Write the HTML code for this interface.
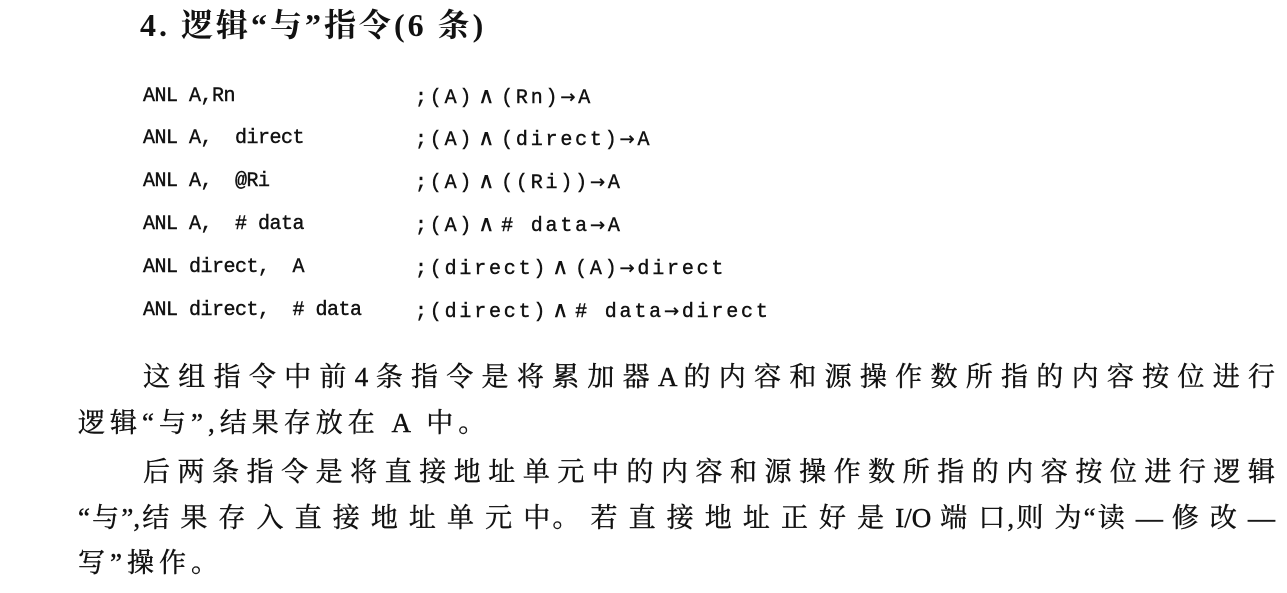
<!DOCTYPE html>
<html><head><meta charset="utf-8"><style>
body{margin:0;width:1287px;height:593px;background:#fff;position:relative;overflow:hidden;color:#111}
.t{position:absolute;white-space:pre}
.h{left:140px;top:0px;font:bold 32px "Liberation Serif","Noto Serif CJK SC",serif;letter-spacing:3px}
.c{font:20px/24px "Liberation Mono","DejaVu Sans Mono",monospace;letter-spacing:-0.5px;-webkit-text-stroke:0.4px #111}
.r{letter-spacing:2.8px}
.c b{font-weight:normal;font-family:"DejaVu Sans",sans-serif;font-size:22px;margin:0 4px}
.c i{font-style:normal;font-family:"DejaVu Sans",sans-serif;font-size:18px}
.p{font:27px "Liberation Serif","Noto Serif CJK SC",serif;-webkit-text-stroke:0.4px #111}
.j{text-align:justify;text-align-last:justify;white-space:normal}
</style></head><body>
<div class="t h">4. 逻辑“与”指令(6 条)</div>
<div class="t c" style="left:143px;top:85px">ANL A,Rn</div>
<div class="t c" style="left:143px;top:127px">ANL A,  direct</div>
<div class="t c" style="left:143px;top:170px">ANL A,  @Ri</div>
<div class="t c" style="left:143px;top:213px">ANL A,  # data</div>
<div class="t c" style="left:143px;top:256px">ANL direct,  A</div>
<div class="t c" style="left:143px;top:299px">ANL direct,  # data</div>
<div class="t c r" style="left:415px;top:85px">;(A)<b>∧</b>(Rn)<i>→</i>A</div>
<div class="t c r" style="left:415px;top:127px">;(A)<b>∧</b>(direct)<i>→</i>A</div>
<div class="t c r" style="left:415px;top:170px">;(A)<b>∧</b>((Ri))<i>→</i>A</div>
<div class="t c r" style="left:415px;top:213px">;(A)<b>∧</b># data<i>→</i>A</div>
<div class="t c r" style="left:415px;top:256px">;(direct)<b>∧</b>(A)<i>→</i>direct</div>
<div class="t c r" style="left:415px;top:299px">;(direct)<b>∧</b># data<i>→</i>direct</div>
<div class="t p j" style="left:143px;width:1132px;top:355px">这 组 指 令 中 前 4 条 指 令 是 将 累 加 器 A 的 内 容 和 源 操 作 数 所 指 的 内 容 按 位 进 行</div>
<div class="t p" style="left:78px;top:401px;letter-spacing:5px">逻辑“与”,结果存放在 A 中。</div>
<div class="t p j" style="left:143px;width:1132px;top:450px">后 两 条 指 令 是 将 直 接 地 址 单 元 中 的 内 容 和 源 操 作 数 所 指 的 内 容 按 位 进 行 逻 辑</div>
<div class="t p j" style="left:78px;width:1197px;top:496px">“与”,结 果 存 入 直 接 地 址 单 元 中。 若 直 接 地 址 正 好 是 I/O 端 口,则 为“读 — 修 改 —</div>
<div class="t p" style="left:78px;top:541px;letter-spacing:5px">写”操作。</div>
</body></html>
